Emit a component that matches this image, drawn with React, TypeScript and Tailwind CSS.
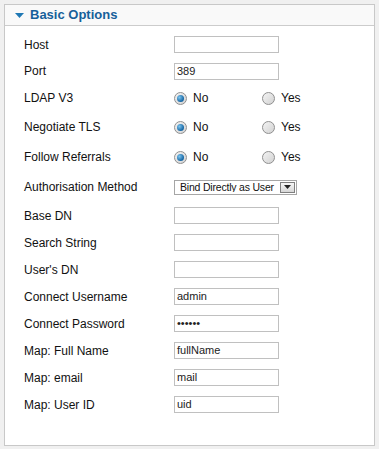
import React from "react";

type Row =
  | { label: string; kind: "text"; value?: string; h: string }
  | { label: string; kind: "password"; value: string; h: string }
  | { label: string; kind: "radio"; h: string }
  | { label: string; kind: "select"; value: string; h: string };

const rows: Row[] = [
  { label: "Host", kind: "text", h: "h-[27px]" },
  { label: "Port", kind: "text", value: "389", h: "h-[26px]" },
  { label: "LDAP V3", kind: "radio", h: "h-[28px]" },
  { label: "Negotiate TLS", kind: "radio", h: "h-[30px]" },
  { label: "Follow Referrals", kind: "radio", h: "h-[30px]" },
  { label: "Authorisation Method", kind: "select", value: "Bind Directly as User", h: "h-[30px]" },
  { label: "Base DN", kind: "text", h: "h-[27px]" },
  { label: "Search String", kind: "text", h: "h-[27px]" },
  { label: "User's DN", kind: "text", h: "h-[27px]" },
  { label: "Connect Username", kind: "text", value: "admin", h: "h-[27px]" },
  { label: "Connect Password", kind: "password", value: "••••••", h: "h-[27px]" },
  { label: "Map: Full Name", kind: "text", value: "fullName", h: "h-[27px]" },
  { label: "Map: email", kind: "text", value: "mail", h: "h-[27px]" },
  { label: "Map: User ID", kind: "text", value: "uid", h: "h-[27px]" },
];

const Radio = ({ checked, label }: { checked?: boolean; label: string }) => (
  <span className="flex items-center gap-[6px]">
    <span className="flex h-[13px] w-[13px] items-center justify-center rounded-full border border-[#8f8f8f] bg-gradient-to-br from-[#f4f4f4] to-[#d2d2d2]">
      {checked && (
        <span className="h-[7px] w-[7px] rounded-full bg-[radial-gradient(circle_at_35%_35%,#7cc4ee,#1465a3_70%)]" />
      )}
    </span>
    <span className="text-[12px] text-[#111]">{label}</span>
  </span>
);

const Field = ({ value }: { value?: string }) => (
  <div className="flex h-[17px] w-[105px] items-center border border-[#c0c0c0] bg-white px-[2px] text-[11px] leading-none text-[#222]">
    {value}
  </div>
);

export default function App() {
  return (
    <div className="min-h-[449px] bg-[#f0f0f0] p-[4px] [font-family:'Liberation_Sans',Arial,sans-serif]">
      <div className="h-[442px] border border-[#c8c8c8] bg-white">
        {/* Header */}
        <div className="flex h-[21px] items-center border-b border-[#cccccc] bg-[#f9f9f9] pl-[10px]">
          <svg width="9" height="5" viewBox="0 0 9 5" className="mr-[6px]">
            <polygon points="0,0 9,0 4.5,5" fill="#1f78b4" />
          </svg>
          <span className="text-[13px] font-bold text-[#16609a]">Basic Options</span>
        </div>

        <div className="flex flex-col pl-[19px] pt-[5px]">
          {rows.map((r) => (
            <div key={r.label} className={`flex items-center ${r.h}`}>
              <span className="w-[150px] text-[12px] text-[#111]">{r.label}</span>
              {(r.kind === "text" || r.kind === "password") && <Field value={r.value} />}
              {r.kind === "radio" && (
                <div className="flex">
                  <div className="w-[88px]">
                    <Radio checked label="No" />
                  </div>
                  <Radio label="Yes" />
                </div>
              )}
              {r.kind === "select" && (
                <div className="flex h-[15px] w-[123px] items-center border border-[#a6a6a6] bg-white">
                  <span className="flex-1 overflow-hidden whitespace-nowrap pl-[5px] text-[10.5px] leading-none tracking-[-0.2px] text-[#111]">
                    {r.value}
                  </span>
                  <span className="mr-[1px] flex h-[11px] w-[15px] items-center justify-center border border-[#7f7f7f] bg-gradient-to-b from-[#f6f6f6] to-[#d6d6d6]">
                    <svg width="7" height="4" viewBox="0 0 7 4">
                      <polygon points="0,0 7,0 3.5,4" fill="#222" />
                    </svg>
                  </span>
                </div>
              )}
            </div>
          ))}
        </div>
      </div>
    </div>
  );
}
